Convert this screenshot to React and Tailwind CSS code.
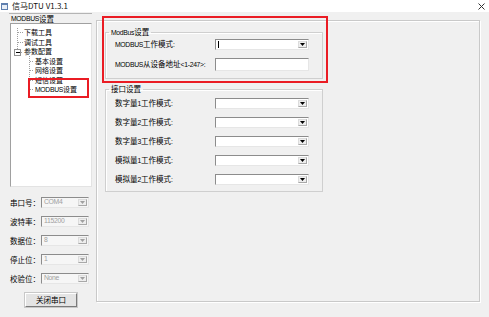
import React from 'react'

// latin runs are drawn narrower, like the old bitmap system font
function T({ s }) {
  const parts = s.split(/([\x21-\x7e][\x20-\x7e]*)/).filter(Boolean)
  return parts.map((p, i) =>
    /^[\x20-\x7e]+$/.test(p) ? (
      <span key={i} className="font-['Liberation_Sans',sans-serif] text-[6.8px] tracking-[-0.3px]">{p}</span>
    ) : (
      <span key={i}>{p}</span>
    )
  )
}

function Arrow({ color = '#000' }) {
  return (
    <svg width="5" height="3" viewBox="0 0 5 3">
      <path d="M0 0h5L2.5 3z" fill={color} />
    </svg>
  )
}

function Combo({ value, disabled, caret, w = 'w-[94px]' }) {
  return (
    <div className={`${w} h-[11px] flex border border-[#8c8c8c] border-b-[#e6e6e6] border-r-[#e6e6e6] ${disabled ? 'bg-[#f6f6f6]' : 'bg-white'}`}>
      <div className="flex-1 flex items-center pl-[2px] text-[#a0a0a0]">
        {caret && <span className="w-px h-[7px] bg-black" />}
        {value && <T s={value} />}
      </div>
      <div className="w-[9px] my-px mr-px bg-[#eeeeee] border border-[#dcdcdc] border-b-[#a8a8a8] border-r-[#a8a8a8] flex items-center justify-center">
        <Arrow color={disabled ? '#a0a0a0' : '#000'} />
      </div>
    </div>
  )
}

function Group({ title, className = '', children }) {
  return (
    <fieldset className={`w-[218px] border border-[#cfcfcf] shadow-[inset_1px_1px_0_#fff] ${className}`}>
      <legend className="ml-[3px] px-[2px] leading-[10px]">
        <T s={title} />
      </legend>
      {children}
    </fieldset>
  )
}

function Row({ label, className = 'mt-[8px]', children }) {
  return (
    <div className={`flex items-center pl-[9px] ${className}`}>
      <div className="w-[100px] whitespace-nowrap">
        <T s={label} />
      </div>
      {children}
    </div>
  )
}

const TREE = [
  { text: '下载工具', cls: 'pl-[13px]' },
  { text: '调试工具', cls: 'pl-[13px]' },
  { text: '参数配置', cls: 'pl-[13px]' },
  { text: '基本设置', cls: 'pl-[24px]' },
  { text: '网络设置', cls: 'pl-[24px]' },
  { text: '短信设置', cls: 'pl-[24px]' },
  { text: 'MODBUS设置', cls: 'pl-[24px]' },
]

const ROW_Y = TREE.map((_, i) => 8.5 + i * 9.5)

const PORT = [
  ['串口号：', 'COM4'],
  ['波特率：', '115200'],
  ['数据位：', '8'],
  ['停止位：', '1'],
  ['校验位：', 'None'],
]

const IFACE = ['数字量1工作模式:', '数字量2工作模式:', '数字量3工作模式:', '模拟量1工作模式:', '模拟量2工作模式:']

function TreeLines() {
  return (
    <svg className="absolute left-0 top-0" width="80" height="80" shapeRendering="crispEdges">
      <g stroke="#a0a0a0" strokeDasharray="1 1">
        <line x1="6.5" y1="4" x2="6.5" y2="25" />
        <line x1="7" y1={ROW_Y[0]} x2="12" y2={ROW_Y[0]} />
        <line x1="7" y1={ROW_Y[1]} x2="12" y2={ROW_Y[1]} />
        <line x1="10" y1="28.5" x2="12" y2="28.5" />
        <line x1="18.5" y1="32" x2="18.5" y2={ROW_Y[6]} />
        {[3, 4, 5, 6].map((i) => (
          <line key={i} x1="19" y1={ROW_Y[i]} x2="23" y2={ROW_Y[i]} />
        ))}
      </g>
      <rect x="3.5" y="25.5" width="6" height="6" fill="#fff" stroke="#919191" />
      <line x1="5" y1="28.5" x2="9" y2="28.5" stroke="#000" />
    </svg>
  )
}

export default function App() {
  return (
    <div className="relative w-[489px] h-[317px] overflow-hidden bg-[#f0f0f0] text-[7.5px] leading-none text-black font-['Noto_Sans_CJK_SC',sans-serif]">
      {/* title bar */}
      <div className="h-[12px] bg-white flex items-center">
        <svg className="ml-[1px]" width="7" height="7" viewBox="0 0 7 7">
          <rect x="0" y="0" width="7" height="7" fill="#5f7fae" />
          <rect x="1" y="2" width="5" height="4" fill="#e8eef6" />
        </svg>
        <span className="ml-[4px] text-[8px] text-[#111]">信马DTU V1.3.1</span>
        <svg className="ml-auto mr-[4px]" width="7" height="7" viewBox="0 0 7 7">
          <path d="M0.5 0.5l6 6M6.5 0.5l-6 6" stroke="#333" strokeWidth="1" />
        </svg>
      </div>

      <div className="flex pt-[1px]">
        {/* left pane */}
        <div className="ml-[9px] w-[83px] flex flex-col">
          <div className="h-[10px] border-t border-[#b4b4b4] flex items-center pl-[2px] pt-[1px]">
            <T s="MODBUS设置" />
          </div>
          <div className="relative ml-[1px] w-[82px] h-[164px] bg-white border border-[#a0a0a0] border-b-[#e3e3e3] border-r-[#e3e3e3] pt-[4px] text-[7px]">
            <TreeLines />
            {TREE.map((t) => (
              <div key={t.text} className={`h-[9.5px] leading-[9.5px] whitespace-nowrap ${t.cls}`}>
                <T s={t.text} />
              </div>
            ))}
          </div>

          <div className="mt-[10px] flex flex-col gap-[8px] pl-[1px]">
            {PORT.map(([label, value]) => (
              <div key={label} className="flex items-center h-[11px]">
                <div className="w-[31px] whitespace-nowrap">{label}</div>
                <Combo value={value} disabled w="w-[48px]" />
              </div>
            ))}
          </div>

          <button className="mt-[9px] ml-[16px] w-[52px] h-[14px] bg-[#e4e4e4] border border-[#ffffff] border-b-[#7a7a7a] border-r-[#7a7a7a] shadow-[0_0_0_1px_#c8c8c8] flex items-center justify-center">
            关闭串口
          </button>
        </div>

        {/* main page */}
        <div className="ml-[4px] mt-[7px] w-[384px] h-[282px] border border-[#c9c9c9] shadow-[1px_1px_0_#fff,inset_1px_1px_0_#fff] pl-[8px]">
          <Group title="ModBus设置" className="mt-[6px] pb-[7px]">
            <Row label="MODBUS工作模式:" className="mt-[1px]">
              <Combo caret />
            </Row>
            <Row label="MODBUS从设备地址<1-247>:">
              <div className="w-[94px] h-[13px] bg-white border border-[#8c8c8c] border-b-[#e6e6e6] border-r-[#e6e6e6]" />
            </Row>
          </Group>

          <Group title="接口设置" className="mt-[5px] pb-[6px]">
            {IFACE.map((label, i) => (
              <Row key={label} label={label} className={i === 0 ? 'mt-[4px]' : 'mt-[8px]'}>
                <Combo />
              </Row>
            ))}
          </Group>
        </div>
      </div>

      {/* red annotation boxes */}
      <div className="absolute left-[28px] top-[78px] w-[61px] h-[20px] border-2 border-[#ea1c24]" />
      <div className="absolute left-[102px] top-[16px] w-[226px] h-[67px] border-2 border-[#ea1c24]" />
    </div>
  )
}
